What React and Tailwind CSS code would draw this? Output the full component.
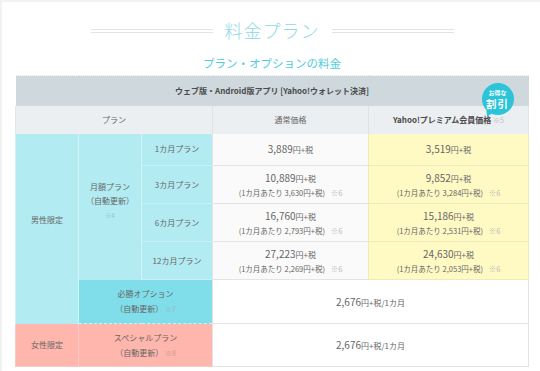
const font = { fontFamily: '"Noto Sans CJK JP", "Noto Sans", sans-serif' };

function Price({ main, unit = '円+税', sub }) {
  return (
    <div className="leading-none">
      <div>
        <span className="text-[10px]">{main}</span>
        <span className="text-[8px]">{unit}</span>
      </div>
      {sub && (
        <div className="mt-[6px] text-[7.5px]">
          (1カ月あたり {sub}円+税) <span className="ml-[4px] text-[#bbb]">※6</span>
        </div>
      )}
    </div>
  );
}

const ROWS = [
  { label: '1カ月プラン', h: 'h-[32px]', normal: '3,889', premium: '3,519' },
  { label: '3カ月プラン', h: 'h-[38px]', normal: '10,889', ns: '3,630', premium: '9,852', ps: '3,284' },
  { label: '6カ月プラン', h: 'h-[38px]', normal: '16,760', ns: '2,793', premium: '15,186', ps: '2,531' },
  { label: '12カ月プラン', h: 'h-[38px]', normal: '27,223', ns: '2,269', premium: '24,630', ps: '2,053' },
];

export default function App() {
  return (
    <div className="w-[540px] h-[371px] bg-[#f2f2f2] pl-[2px] pt-[2px] overflow-hidden" style={font}>
      <div className="h-full bg-white pt-[12px]">
        {/* タイトル */}
        <div className="flex items-center justify-center gap-[12px] ml-[2px] mt-[3px]">
          <div className="w-[122px] h-[4px] border-y border-[#e3e3e3] mt-[2px]" />
          <h1 className="text-[18px] font-light text-[#8fd9e6] tracking-[1px] leading-[26px]">料金プラン</h1>
          <div className="w-[122px] h-[4px] border-y border-[#e3e3e3] mt-[2px]" />
        </div>
        <h2 className="mt-[12px] text-center text-[11.5px] text-[#4fcde0] leading-[16px] ml-[2px]">プラン・オプションの料金</h2>

        <table className="mt-[4px] ml-[13px] w-[513px] border-collapse table-fixed text-[#666] text-center text-[8px] leading-[12px]">
          <colgroup>
            <col className="w-[63px]" />
            <col className="w-[63px]" />
            <col className="w-[71px]" />
            <col className="w-[156px]" />
            <col className="w-[160px]" />
          </colgroup>
          <tbody>
            <tr className="h-[30px] bg-[#cfd8dc]">
              <td colSpan={5} className="relative font-semibold text-[#4a4a4a] border-t border-dotted border-[#e6e6e6]">
                ウェブ版・Android版アプリ [Yahoo!ウォレット決済]
                <div className="absolute right-[15px] top-[7px] z-10 w-[32px] h-[32px] rounded-full bg-[#2bc4d8] text-white font-bold flex flex-col items-center justify-center gap-[2px] leading-none">
                  <span className="text-[6px] leading-[6px]">お得な</span>
                  <span className="text-[10.5px] leading-[11px] tracking-[1px]">割引</span>
                  <span className="absolute left-[3px] bottom-[-2px] w-0 h-0 border-l-[3px] border-r-[5px] border-t-[6px] border-l-transparent border-r-transparent border-t-[#2bc4d8] rotate-[20deg]" />
                </div>
              </td>
            </tr>
            <tr className="h-[28px] bg-[#eceff1] border-x border-[#e3e6e8]">
              <td colSpan={3} className="border-r border-[#dfe3e5]">プラン</td>
              <td className="border-r border-[#dfe3e5]">通常価格</td>
              <td className="font-semibold text-[#4a4a4a]">
                Yahoo!プレミアム会員価格 <span className="font-normal text-[#bbb] text-[7px]">※5</span>
              </td>
            </tr>
            {ROWS.map((r, i) => (
              <tr key={r.label} className={r.h}>
                {i === 0 && (
                  <>
                    <td rowSpan={5} className="bg-[#b2ebf2] border-l border-r border-[#d4f3f7] pb-[18px]">男性限定</td>
                    <td rowSpan={4} className="bg-[#b2ebf2] border-r border-[#d4f3f7] pb-[10px]">
                      <div className="leading-[14px]">
                        月額プラン
                        <br />
                        （自動更新）
                        <br />
                        <span className="text-[6px] text-[#9bbfc4]">※4</span>
                      </div>
                    </td>
                  </>
                )}
                <td className="bg-[#b2ebf2] border-b border-[#c8f0f5]">{r.label}</td>
                <td className="bg-[#fafafa] border-l border-b border-[#e4e4e4]">
                  <Price main={r.normal} sub={r.ns} />
                </td>
                <td className="bg-[#fff9c4] border-l border-r border-b border-[#eeeaba]">
                  <Price main={r.premium} sub={r.ps} />
                </td>
              </tr>
            ))}
            <tr className="h-[44px]">
              <td colSpan={2} className="bg-[#80deea] border-b border-dashed border-[#cfeff4]">
                <div className="leading-[15px]">
                  必勝オプション
                  <br />
                  （自動更新） <span className="text-[7px] text-[#9ab8bd]">※7</span>
                </div>
              </td>
              <td colSpan={2} className="bg-white border-x border-b border-[#e4e4e4]">
                <Price main="2,676" unit="円+税/1カ月" />
              </td>
            </tr>
            <tr className="h-[43px]">
              <td className="bg-[#ffb6ac] border-l border-r border-b border-[#f5cbc5]">女性限定</td>
              <td colSpan={2} className="bg-[#ffb6ac] border-b border-[#f5cbc5]">
                <div className="leading-[15px]">
                  スペシャルプラン
                  <br />
                  （自動更新） <span className="text-[7px] text-[#d9958c]">※8</span>
                </div>
              </td>
              <td colSpan={2} className="bg-white border-x border-b border-[#e4e4e4]">
                <Price main="2,676" unit="円+税/1カ月" />
              </td>
            </tr>
          </tbody>
        </table>
      </div>
    </div>
  );
}
